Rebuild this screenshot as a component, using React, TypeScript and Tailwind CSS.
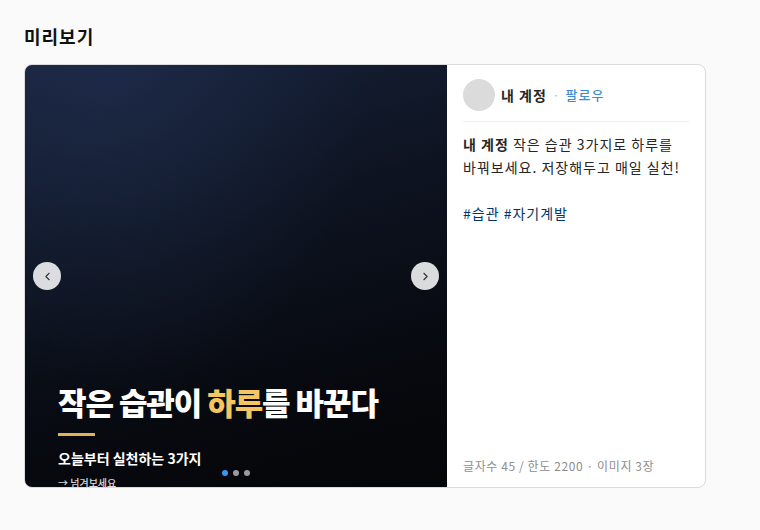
import { ChevronLeft, ChevronRight } from 'lucide-react';

const FONT = "font-['Noto_Sans_CJK_KR','Noto_Sans',sans-serif]";

const Slide = () => (
  <div className="relative h-[422px] w-[422px] shrink-0 overflow-hidden bg-[linear-gradient(165deg,#172139_0%,#0d1320_40%,#07090f_75%,#050608_100%)]">
    {/* soft glow, top-left */}
    <div className="absolute inset-0 bg-[radial-gradient(ellipse_at_20%_0%,rgba(36,52,88,0.5),transparent_55%)]" />

    <div className="relative flex h-full flex-col justify-end px-[33px]">
      <h2 className="text-[31px] font-black leading-[40px] tracking-[-0.035em] text-white">
        작은 습관이 <span className="text-[#f5c55f]">하루</span>를 바꾼다
      </h2>
      <div className="mt-[11px] h-[3px] w-[37px] bg-[#e2b350]" />
      <p className="mt-[12px] text-[14px] font-bold leading-[20px] text-white">오늘부터 실천하는 3가지</p>
      <p className="-mb-[3px] mt-[8px] text-[10px] font-medium leading-[14px] text-white/85">→ 넘겨보세요</p>
    </div>

    {/* nav arrows */}
    <button className="absolute left-2 top-1/2 flex h-7 w-7 -translate-y-1/2 items-center justify-center rounded-full bg-white/85 text-[#333]">
      <ChevronLeft size={13} strokeWidth={2} />
    </button>
    <button className="absolute right-2 top-1/2 flex h-7 w-7 -translate-y-1/2 items-center justify-center rounded-full bg-white/85 text-[#333]">
      <ChevronRight size={13} strokeWidth={2} />
    </button>

    {/* dots */}
    <div className="absolute bottom-[11px] left-0 right-0 flex justify-center gap-[5px]">
      <span className="h-[6px] w-[6px] rounded-full bg-[#3897f0]" />
      <span className="h-[6px] w-[6px] rounded-full bg-white/60" />
      <span className="h-[6px] w-[6px] rounded-full bg-white/60" />
    </div>
  </div>
);

const Caption = () => (
  <div className="flex flex-1 flex-col px-4 pt-[14px] pb-3">
    <div className="flex items-center gap-[6px] border-b border-[#efefef] pb-[10px]">
      <div className="h-8 w-8 rounded-full bg-[#dbdbdb]" />
      <span className="text-[14px] font-bold tracking-[1px] text-[#262626]">내 계정</span>
      <span className="text-[12px] text-[#b0b0b0]">·</span>
      <span className="text-[13px] font-medium tracking-[1px] text-[#3a8ed6]">팔로우</span>
    </div>

    <p className="mt-[11px] whitespace-pre-wrap text-[14px] leading-[23px] tracking-[1px] text-[#262626]">
      <b className="font-bold">내 계정</b> 작은 습관 3가지로 하루를 바꿔보세요. 저장해두고 매일 실천!{'\n\n'}
      <span className="text-[#00376b]">#습관 #자기계발</span>
    </p>

    <p className="mt-auto text-[12px] leading-[18px] tracking-[0.6px] text-[#8e8e8e]">글자수 45 / 한도 2200 · 이미지 3장</p>
  </div>
);

export default function App() {
  return (
    <div className={`min-h-[530px] bg-[#fafafa] px-6 pt-6 ${FONT}`}>
      <h1 className="text-[18px] font-bold leading-6 tracking-[1px] text-[#111]">미리보기</h1>
      <div className="mt-4 flex w-[682px] overflow-hidden rounded-lg border border-[#dbdbdb] bg-white">
        <Slide />
        <Caption />
      </div>
    </div>
  );
}
